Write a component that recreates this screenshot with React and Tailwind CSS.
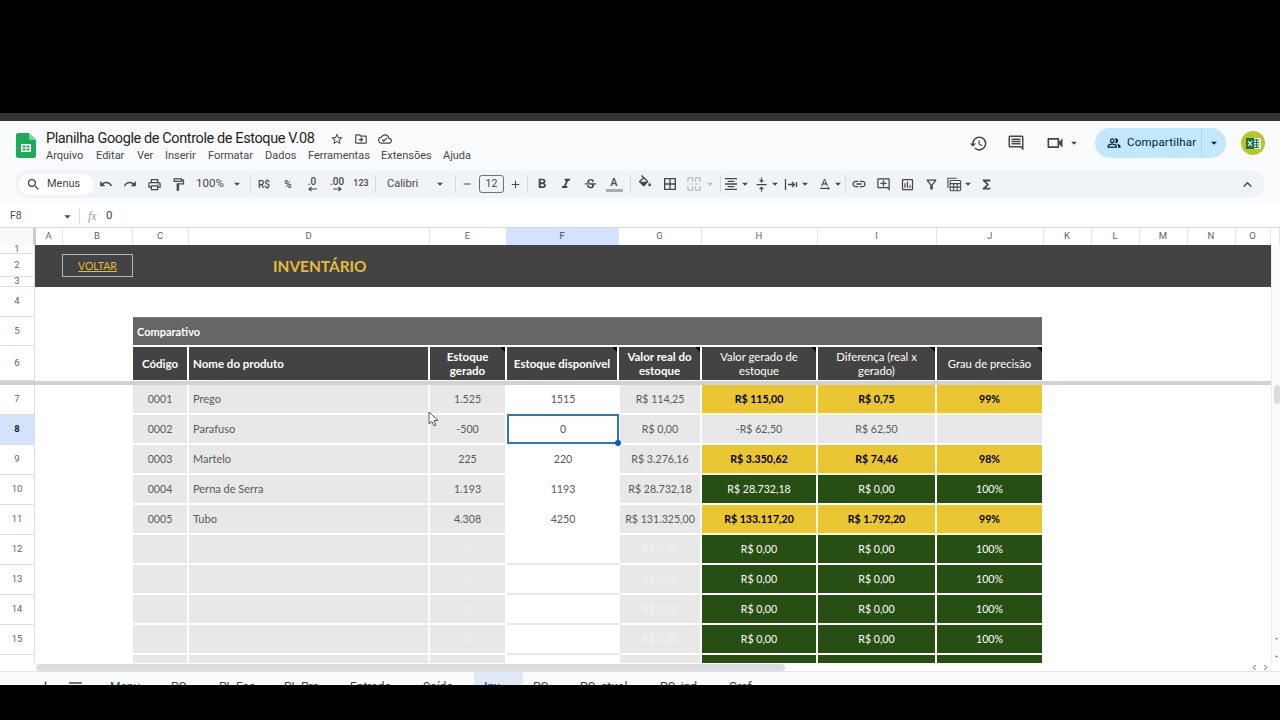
import React from 'react';
import {
  MdSearch, MdUndo, MdRedo, MdOutlinePrint, MdOutlineFormatPaint, MdArrowDropDown, MdAdd, MdRemove,
  MdFormatBold, MdFormatItalic, MdStrikethroughS, MdOutlineFormatColorFill, MdBorderAll,
  MdFormatAlignCenter, MdVerticalAlignCenter, MdTextRotationNone, MdLink, MdOutlineAddComment,
  MdOutlineInsertChart, MdOutlineFilterAlt, MdFunctions, MdExpandLess, MdHistory, MdOutlineComment,
  MdOutlineVideocam, MdOutlinePeopleAlt, MdStarBorder, MdOutlineDriveFileMove, MdOutlineCloudDone,
  MdMenu, MdChevronLeft, MdChevronRight,
} from 'react-icons/md';

const ROW_GRID = 'grid grid-cols-[36px_97px_56px_241px_77px_112px_83px_116px_119px_105px_229px]';
const COL_GRID = 'grid grid-cols-[36px_27px_70px_56px_241px_77px_112px_83px_116px_119px_107px_48px_48px_48px_48px_35px_9px]';
const CALIBRI = "font-['Lato',sans-serif]";

const columns = ['', 'A', 'B', 'C', 'D', 'E', 'F', 'G', 'H', 'I', 'J', 'K', 'L', 'M', 'N', 'O', ''];

const products = [
  { n: 7, code: '0001', name: 'Prego', gen: '1.525', avail: '1515', real: 'R$ 114,25', val: 'R$ 115,00', diff: 'R$ 0,75', pct: '99%', tone: 'y' },
  { n: 8, code: '0002', name: 'Parafuso', gen: '-500', avail: '0', real: 'R$ 0,00', val: '-R$ 62,50', diff: 'R$ 62,50', pct: '', tone: 'n' },
  { n: 9, code: '0003', name: 'Martelo', gen: '225', avail: '220', real: 'R$ 3.276,16', val: 'R$ 3.350,62', diff: 'R$ 74,46', pct: '98%', tone: 'y' },
  { n: 10, code: '0004', name: 'Perna de Serra', gen: '1.193', avail: '1193', real: 'R$ 28.732,18', val: 'R$ 28.732,18', diff: 'R$ 0,00', pct: '100%', tone: 'g' },
  { n: 11, code: '0005', name: 'Tubo', gen: '4.308', avail: '4250', real: 'R$ 131.325,00', val: 'R$ 133.117,20', diff: 'R$ 1.792,20', pct: '99%', tone: 'y' },
  { n: 12, tone: 'g', empty: true },
  { n: 13, tone: 'g', empty: true },
  { n: 14, tone: 'g', empty: true },
  { n: 15, tone: 'g', empty: true },
  { n: 16, tone: 'g', empty: true },
];

const tabs = [
  ['Menu', 'w-[61px]'], ['PC', 'w-[48px]'], ['PL Fac', 'w-[65px]'], ['PL Pro', 'w-[66px]'], ['Entrada', 'w-[73px]'],
  ['Saída', 'w-[61px]'], ['Inv', 'w-[49px]'], ['PC', 'w-[47px]'], ['PC_atual', 'w-[80px]'], ['PC_ind', 'w-[69px]'], ['Graf', 'w-[50px]'],
];

function Slot({ w, children, className = '' }) {
  return <div className={`${w} shrink-0 flex items-center justify-center h-full text-[#444746] ${className}`}>{children}</div>;
}

function Caret({ w = 'w-[10px]', off }) {
  return (
    <Slot w={w}>
      <MdArrowDropDown className={`shrink-0 ${off ? 'text-[#b5b8bb]' : 'text-[#444746]'}`} size={14} />
    </Slot>
  );
}

function Divider({ w }) {
  return <Slot w={w}><div className="w-px h-[18px] bg-[#d5d8dc]" /></Slot>;
}

function NoteMark() {
  return <div className="absolute top-0 right-0 w-[5px] h-[5px] bg-black [clip-path:polygon(0_0,100%_0,100%_100%)]" />;
}

function SheetsLogo() {
  return (
    <svg width="20" height="25" viewBox="0 0 20 25">
      <path d="M2 0h11l7 7v16a2 2 0 0 1-2 2H2a2 2 0 0 1-2-2V2a2 2 0 0 1 2-2z" fill="#1fa95a" />
      <path d="M13 0l7 7h-5a2 2 0 0 1-2-2z" fill="#7fd3a0" />
      <path d="M5 11h10v8H5zM6.5 12.5v2h3v-2zM10.5 12.5v2h3v-2zM6.5 15.5v2h3v-2zM10.5 15.5v2h3v-2z" fill="#fff" fillRule="evenodd" />
    </svg>
  );
}

function ExcelAvatar() {
  return (
    <div className="w-6 h-6 rounded-full bg-[#b7c62f] flex items-center justify-center">
      <svg width="15" height="13" viewBox="0 0 15 13">
        <rect x="6" y="1" width="9" height="11" fill="#e4efe6" />
        <path d="M8 3h5M8 5.5h5M8 8h5M8 10.5h5M10.5 2v9" stroke="#217346" strokeWidth="1" />
        <rect x="0" y="1" width="8" height="11" fill="#1e7145" />
        <path d="M2 4l4 5M6 4l-4 5" stroke="#fff" strokeWidth="1.2" />
      </svg>
    </div>
  );
}

function MergeIcon() {
  return (
    <svg width="14" height="14" viewBox="0 0 15 15" fill="none" stroke="#b5b8bb" strokeWidth="1.3">
      <path d="M1 5V1h5v4M9 5V1h5v4M1 10v4h5v-4M9 10v4h5v-4M3 7.5h3M9 7.5h3" />
    </svg>
  );
}

function WrapIcon() {
  return (
    <svg width="14" height="13" viewBox="0 0 14 13" fill="none" stroke="#444746" strokeWidth="1.3">
      <path d="M1.5 1v11M12.5 4v5M4 6.5h6.5M8 4l2.5 2.5L8 9" />
    </svg>
  );
}

function FilterViewIcon() {
  return (
    <svg width="15" height="15" viewBox="0 0 17 16" fill="none" stroke="#444746" strokeWidth="1.2">
      <path d="M1 12V1h10" />
      <rect x="3.5" y="3.5" width="12" height="11.5" rx="1" />
      <path d="M3.5 7h12M3.5 11h12M7.5 7v8M11.5 7v8" />
    </svg>
  );
}

function DecimalArrow({ dir }) {
  return (
    <svg width="9" height="6" viewBox="0 0 9 6" fill="none" stroke="#444746" strokeWidth="1.1" className={dir === 'left' ? '' : 'rotate-180'}>
      <path d="M9 3H1M3.5 1L1 3l2.5 2" />
    </svg>
  );
}

function Cursor() {
  return (
    <svg className="absolute left-[428px] top-[166px]" width="11" height="16" viewBox="0 0 11 16">
      <path d="M1 1v12l3-2.5 2 4.5 2-1-2-4.5h4z" fill="#fff" stroke="#555" strokeWidth="1" />
    </svg>
  );
}

function Header() {
  return (
    <div className="h-[49px] shrink-0 flex items-start">
      <div className="ml-[16px] mt-[12px] w-[30px] shrink-0"><SheetsLogo /></div>
      <div className="mt-[9px] w-[880px] shrink-0">
        <div className="flex items-center h-[18px]">
          <span className="text-[14.5px] leading-[18px] tracking-[-0.4px] whitespace-nowrap text-[#1f1f1f] w-[284px] shrink-0">Planilha Google de Controle de Estoque V.08</span>
          <MdStarBorder size={14} className="text-[#444746] shrink-0" />
          <MdOutlineDriveFileMove size={14} className="text-[#444746] ml-[10px] shrink-0" />
          <MdOutlineCloudDone size={14} className="text-[#444746] ml-[10px] shrink-0" />
        </div>
        <div className="flex -mt-[1px] text-[11px] leading-[17px] text-[#444746]">
          <span className="w-[50px]">Arquivo</span>
          <span className="w-[41px]">Editar</span>
          <span className="w-[28px]">Ver</span>
          <span className="w-[43px]">Inserir</span>
          <span className="w-[57px]">Formatar</span>
          <span className="w-[43px]">Dados</span>
          <span className="w-[73px]">Ferramentas</span>
          <span className="w-[62px]">Extensões</span>
          <span>Ajuda</span>
        </div>
      </div>
      <div className="flex items-center h-[30px] mt-[7px] ml-[43px]">
        <MdHistory size={19} className="text-[#444746] shrink-0" />
        <MdOutlineComment size={18} className="text-[#444746] ml-[19px] shrink-0" />
        <MdOutlineVideocam size={20} className="text-[#444746] ml-[20px] shrink-0" />
        <Caret w="w-[10px] ml-[4px]" />
        <div className="ml-[16px] w-[131px] h-[30px] rounded-full bg-[#c2e7ff] flex items-center text-[#001d35]">
          <MdOutlinePeopleAlt size={14} className="ml-[12px] shrink-0" />
          <span className="ml-[6px] text-[11.5px] w-[74px] shrink-0 tracking-[0.2px]">Compartilhar</span>
          <div className="w-px h-full bg-[#b0d8f2] shrink-0" />
          <div className="flex-1 flex justify-center"><MdArrowDropDown size={14} /></div>
        </div>
        <div className="ml-[15px]"><ExcelAvatar /></div>
      </div>
    </div>
  );
}

function Toolbar() {
  return (
    <div className="h-[28px] shrink-0 mx-[15px] rounded-full bg-[#f0f4f9] flex items-center text-[#444746]">
      <div className="ml-[4px] w-[75px] h-[21px] rounded-full bg-white flex items-center shrink-0">
        <MdSearch size={15} className="ml-[7px] shrink-0" />
        <span className="ml-[6px] text-[11px]">Menus</span>
      </div>
      <Slot w="w-[24px]"><MdUndo size={14} /></Slot>
      <Slot w="w-[24px]"><MdRedo size={14} /></Slot>
      <Slot w="w-[24px]"><MdOutlinePrint size={15} /></Slot>
      <Slot w="w-[24px]"><MdOutlineFormatPaint size={15} /></Slot>
      <Slot w="w-[40px]"><span className="text-[11.5px]">100%</span></Slot>
      <Caret w="w-[14px]" />
      <Divider w="w-[12px]" />
      <Slot w="w-[16px]"><span className="text-[10px] font-medium">R$</span></Slot>
      <Slot w="w-[32px]"><span className="text-[10px] font-medium">%</span></Slot>
      <Slot w="w-[16px]">
        <div className="flex flex-col items-center leading-none"><span className="text-[10px] font-medium leading-[9px]">.0</span><DecimalArrow dir="left" /></div>
      </Slot>
      <Slot w="w-[34px]">
        <div className="flex flex-col items-center leading-none"><span className="text-[10px] font-medium leading-[9px]">.00</span><DecimalArrow dir="right" /></div>
      </Slot>
      <Slot w="w-[14px]"><span className="text-[9px] font-medium">123</span></Slot>
      <Divider w="w-[14px]" />
      <Slot w="w-[50px]" className="justify-start"><span className="pl-[5px] text-[11px]">Calibri</span></Slot>
      <Caret w="w-[16px]" />
      <Divider w="w-[14px]" />
      <Slot w="w-[10px]"><MdRemove className="shrink-0" size={12} /></Slot>
      <div className="ml-[7px] w-[25px] h-[18px] shrink-0 rounded-[3px] border border-[#6f7276] flex items-center justify-center text-[10.5px]">12</div>
      <Slot w="w-[22px]"><MdAdd size={13} /></Slot>
      <Divider w="w-[2px]" />
      <Slot w="w-[28px]"><MdFormatBold size={16} /></Slot>
      <Slot w="w-[20px]"><MdFormatItalic size={16} /></Slot>
      <Slot w="w-[28px]"><MdStrikethroughS size={15} /></Slot>
      <Slot w="w-[20px]">
        <div className="flex flex-col items-center"><span className="text-[11px] leading-[12px] font-medium">A</span><div className="w-[17px] h-[3px] bg-[#a9acae]" /></div>
      </Slot>
      <Divider w="w-[12px]" />
      <Slot w="w-[18px]">
        <div className="h-[13px] -mt-[5px] overflow-hidden"><MdOutlineFormatColorFill size={16} className="shrink-0" /></div>
      </Slot>
      <Slot w="w-[32px]"><MdBorderAll size={16} /></Slot>
      <Slot w="w-[16px]"><MergeIcon /></Slot>
      <Caret w="w-[16px]" off />
      <Divider w="w-[4px]" />
      <Slot w="w-[18px]"><MdFormatAlignCenter size={16} className="shrink-0" /></Slot>
      <Caret />
      <div className="w-[2px] shrink-0" />
      <Slot w="w-[18px]"><MdVerticalAlignCenter size={15} className="shrink-0" /></Slot>
      <Caret />
      <div className="w-[2px] shrink-0" />
      <Slot w="w-[18px]"><WrapIcon /></Slot>
      <Caret />
      <div className="w-[5px] shrink-0" />
      <Slot w="w-[18px]"><MdTextRotationNone size={15} className="shrink-0" /></Slot>
      <Caret />
      <Divider w="w-[4px]" />
      <Slot w="w-[24px]"><MdLink size={16} /></Slot>
      <Slot w="w-[24px]"><MdOutlineAddComment size={15} /></Slot>
      <Slot w="w-[25px]"><MdOutlineInsertChart size={15} /></Slot>
      <Slot w="w-[22px]"><MdOutlineFilterAlt size={15} /></Slot>
      <div className="w-[3px] shrink-0" />
      <Slot w="w-[18px]"><FilterViewIcon /></Slot>
      <Caret />
      <Slot w="w-[26px]"><MdFunctions size={15} /></Slot>
      <div className="flex-1" />
      <Slot w="w-[24px] mr-[6px]"><MdExpandLess size={17} /></Slot>
    </div>
  );
}

function FormulaBar() {
  return (
    <div className="h-[22px] mt-[7px] shrink-0 flex items-center bg-white text-[#444746]">
      <span className="ml-[10px] w-[50px] text-[10.5px] shrink-0">F8</span>
      <MdArrowDropDown size={15} className="shrink-0" />
      <div className="ml-[4px] w-px h-[15px] bg-[#dadce0] shrink-0" />
      <span className="ml-[8px] w-[18px] text-[12px] italic font-['Liberation_Serif',serif] text-[#9aa0a6] shrink-0">fx</span>
      <span className="text-[11.5px]">0</span>
    </div>
  );
}

function ColumnHeaders() {
  return (
    <div className={`${COL_GRID} h-[18px] shrink-0 bg-white border-t border-[#d5d7da]`}>
      {columns.map((c, i) => (
        <div
          key={i}
          className={`flex items-center justify-center pr-[1px] text-[9.5px] text-[#5f6368] border-r border-[#e3e5e8] ${c === 'F' ? 'bg-[#d3e3fd] text-[#1f1f1f] font-medium' : ''} ${i === 0 ? 'bg-[#f8f9fa] border-r-[3px] border-r-[#c8cacc]' : ''}`}
        >
          {c}
        </div>
      ))}
    </div>
  );
}

function RowNum({ n, active, h = '' }) {
  return (
    <div className={`${h} w-[35px] shrink-0 overflow-hidden flex items-center justify-center text-[9.5px] border-r border-b border-[#dcdee1] font-['Roboto',sans-serif] ${active ? 'bg-[#d3e3fd] text-[#1f1f1f] font-bold' : 'bg-white text-[#5f6368]'}`}>
      {n}
    </div>
  );
}

function Banner() {
  return (
    <div className="flex h-[42px]">
      <div className="flex flex-col w-[35px] shrink-0">
        <RowNum n="1" h="h-[9px]" />
        <RowNum n="2" h="h-[23px]" />
        <RowNum n="3" h="h-[10px]" />
      </div>
      <div className={`flex-1 bg-[#434343] flex ${CALIBRI}`}>
        <div className="ml-[27px] mt-[9px] w-[71px] h-[23px] pt-[2px] border border-[#b5b5b5] flex items-center justify-center text-[10.5px] text-[#e3bb3d] underline shrink-0">VOLTAR</div>
        <div className="ml-[140px] mt-[10px] h-[24px] flex items-center text-[15.4px] font-bold text-[#e6bb3a]">INVENTÁRIO</div>
      </div>
    </div>
  );
}

function TableHead() {
  const cell = 'relative bg-[#434343] flex items-center pt-[1px] text-[11.3px] leading-[14.5px] text-white mt-[1px] mb-[1px]';
  const sep = 'border-r-2 border-white';
  const strong = 'font-bold text-[11.5px]';
  return (
    <>
      <div className="flex h-[30px]">
        <RowNum n="4" h="h-full" />
      </div>
      <div className={`${ROW_GRID} h-[29px]`}>
        <RowNum n="5" />
        <div />
        <div className="col-span-8 bg-[#666666] border-t border-[#7b7b7b] mb-[1px] flex items-center pt-[1px] pl-[4px] text-[11px] font-bold text-white">Comparativo</div>
      </div>
      <div className={`${ROW_GRID} h-[35px]`}>
        <RowNum n="6" />
        <div />
        <div className={`${cell} ${sep} ${strong} justify-center`}>Código</div>
        <div className={`${cell} ${sep} ${strong} pl-[4px]`}>Nome do produto</div>
        <div className={`${cell} ${sep} ${strong} justify-center text-center`}>Estoque<br />gerado<NoteMark /></div>
        <div className={`${cell} ${sep} ${strong} justify-center text-center`}>Estoque disponível<NoteMark /></div>
        <div className={`${cell} ${sep} ${strong} justify-center text-center`}>Valor real do<br />estoque<NoteMark /></div>
        <div className={`${cell} ${sep} justify-center text-center`}>Valor gerado de<br />estoque<NoteMark /></div>
        <div className={`${cell} ${sep} justify-center text-center`}>Diferença (real x<br />gerado)<NoteMark /></div>
        <div className={`${cell} justify-center text-center`}>Grau de precisão<NoteMark /></div>
      </div>
      <div className="h-[4px] bg-[#d0d3d6]" />
    </>
  );
}

function DataRow({ row }) {
  const { n, code, name, gen, avail, real, val, diff, pct, tone, empty } = row;
  const gray = 'bg-[#e8e8e8] border-r-2 border-b-2 border-white flex items-center justify-center pt-[1px] text-[#595959]';
  const toneClass = {
    y: 'bg-[#ebc634] font-bold text-black border-[#fff7d6]',
    g: 'bg-[#274e13] text-white border-white',
    n: 'bg-[#e8e8e8] text-[#595959] border-white',
  }[tone];
  const toned = `${toneClass} border-b-2 flex items-center justify-center pt-[1px]`;
  return (
    <div className={`${ROW_GRID} h-[30px] text-[10.6px]`}>
      <RowNum n={n} active={n === 8} />
      <div />
      <div className={gray}>{code}</div>
      <div className={`${gray} justify-start pl-[4px] text-[11px]`}>{name}</div>
      <div className={gray}>{empty ? <span className="text-[#f3f3f3]">0</span> : gen}</div>
      <div className={`flex items-center justify-center pt-[1px] text-[#595959] bg-white border-b-2 ${empty ? 'border-[#e8e8e8]' : 'border-white'}`}>{avail}</div>
      <div className={`${gray} border-l border-l-white`}>{empty ? <span className="text-[#f3f3f3]">R$ 0,00</span> : real}</div>
      <div className={`${toned} border-r-2`}>{empty ? 'R$ 0,00' : val}</div>
      <div className={`${toned} border-r-2`}>{empty ? 'R$ 0,00' : diff}</div>
      <div className={toned}>{empty ? '100%' : pct}</div>
    </div>
  );
}

function SelectedCell() {
  return (
    <div className="absolute left-[507px] top-[169px] w-[112px] h-[30px] border-2 border-[#2f78b0]">
      <div className="absolute -right-[4px] -bottom-[4px] w-[6px] h-[6px] rounded-full bg-[#0b57d0]" />
    </div>
  );
}

function Grid() {
  return (
    <div className="h-[418px] shrink-0 flex overflow-hidden bg-white">
      <div className={`relative w-[1271px] shrink-0 ${CALIBRI}`}>
        <Banner />
        <TableHead />
        {products.map((row) => <DataRow key={row.n} row={row} />)}
        <SelectedCell />
        <Cursor />
      </div>
      <div className="flex-1 flex flex-col items-center border-l border-[#e8eaed] bg-[#fafbfc]">
        <div className="mt-[140px] w-[6px] h-[19px] rounded-full bg-[#dadce0]" />
        <div className="mt-auto mb-[2px] flex flex-col text-[#80868b]">
          <MdArrowDropDown size={9} className="rotate-180" />
          <div className="h-[9px]" />
          <MdArrowDropDown size={9} />
        </div>
      </div>
    </div>
  );
}

function HScroll() {
  return (
    <div className="h-[9px] shrink-0 flex items-center bg-white border-b border-[#e3e5e8]">
      <div className="ml-[36px] w-[749px] h-[7px] rounded-full bg-[#dadce0] shrink-0" />
      <div className="ml-auto mr-[9px] flex text-[#80868b]">
        <MdChevronLeft size={11} />
        <MdChevronRight size={11} />
      </div>
    </div>
  );
}

function SheetTabs() {
  return (
    <div className="flex-1 flex bg-[#f9fbfd] text-[12px] text-[#444746]">
      <div className="w-[100px] shrink-0 flex pt-[6px]">
        <MdAdd size={17} className="ml-[37px] shrink-0" />
        <MdMenu size={17} className="ml-[13px] shrink-0" />
      </div>
      {tabs.map(([label, w], i) => (
        <div key={i} className={`${w} shrink-0 flex pl-[10px] pt-[7px] leading-[16px] ${label === 'Inv' ? 'bg-[#e1e9f7] text-[#0b57d0] font-medium' : ''}`}>
          <span>{label}</span>
          <MdArrowDropDown size={15} className="ml-[3px] shrink-0" />
        </div>
      ))}
    </div>
  );
}

export default function App() {
  return (
    <div className="w-[1280px] h-[720px] bg-black overflow-hidden flex flex-col font-['Roboto',sans-serif]">
      <div className="h-[113px] shrink-0" />
      <div className="h-[8px] shrink-0 bg-[#333333]" />
      <div className="h-[564px] shrink-0 flex flex-col overflow-hidden bg-[#f9fbfd]">
        <Header />
        <Toolbar />
        <FormulaBar />
        <ColumnHeaders />
        <Grid />
        <HScroll />
        <SheetTabs />
      </div>
    </div>
  );
}
